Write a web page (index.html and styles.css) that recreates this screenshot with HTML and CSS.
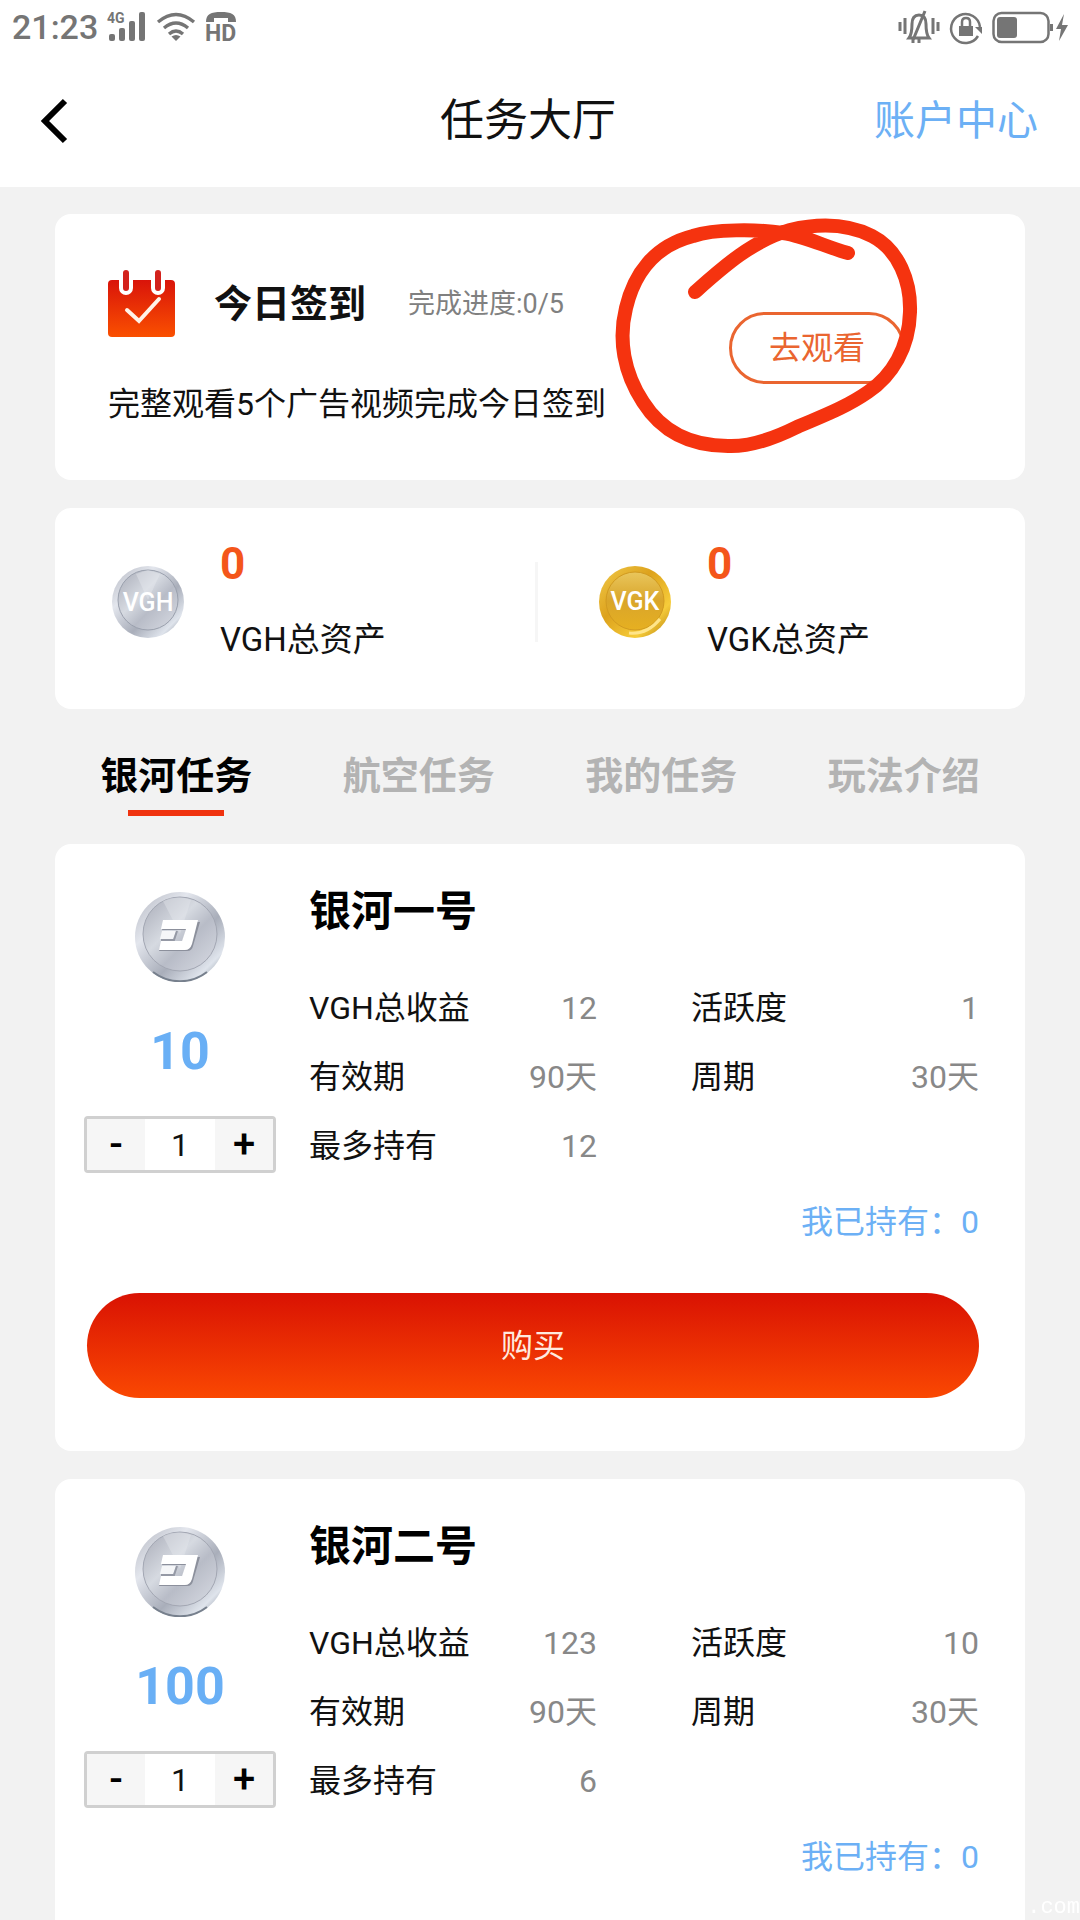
FILE: index.html
```html
<!DOCTYPE html>
<html lang="zh-CN">
<head>
    <meta charset="UTF-8">
    <meta name="viewport" content="width=device-width, initial-scale=1.0">
    <title>任务大厅</title>
    <link rel="stylesheet" href="styles.css">
</head>
<body>
    <!-- shared gradients and the coin used in the task cards -->
    <svg class="defs" aria-hidden="true">
        <defs>
            <linearGradient id="red" x1="0" y1="0" x2="0" y2="1">
                <stop offset="0" stop-color="#d9140a"/>
                <stop offset="1" stop-color="#fa5000"/>
            </linearGradient>
            <linearGradient id="rim" x1="0" y1="0" x2="1" y2="1">
                <stop offset="0" stop-color="#b3b6c0"/>
                <stop offset="0.3" stop-color="#e3e6ed"/>
                <stop offset="0.6" stop-color="#a9aeba"/>
                <stop offset="0.82" stop-color="#dfe4ec"/>
                <stop offset="1" stop-color="#6c7683"/>
            </linearGradient>
            <linearGradient id="face" x1="0" y1="0" x2="1" y2="1">
                <stop offset="0" stop-color="#a7aab6"/>
                <stop offset="0.4" stop-color="#d6dae1"/>
                <stop offset="0.6" stop-color="#b8bcc7"/>
                <stop offset="1" stop-color="#d9dce4"/>
            </linearGradient>
            <linearGradient id="goldRim" x1="0" y1="0" x2="1" y2="1">
                <stop offset="0" stop-color="#f1cb4c"/>
                <stop offset="0.4" stop-color="#dda21c"/>
                <stop offset="0.75" stop-color="#f6cc3a"/>
                <stop offset="1" stop-color="#b27a0c"/>
            </linearGradient>
            <linearGradient id="goldFace" x1="0" y1="0" x2="0" y2="1">
                <stop offset="0" stop-color="#e9c65c"/>
                <stop offset="0.5" stop-color="#d9a52a"/>
                <stop offset="1" stop-color="#e6b021"/>
            </linearGradient>
            <symbol id="coin" viewBox="0 0 90 90">
                <circle cx="45" cy="45" r="45" fill="url(#rim)"/>
                <path d="M18 80a44 44 0 0 0 54 0" fill="none" stroke="#77808d" stroke-width="2"/>
                <circle cx="45" cy="42" r="37" fill="url(#face)" stroke="#a3a7b3" stroke-width="1"/>
                <path d="M45 42 28 9a37 37 0 0 1 28-1z" fill="#e6e8ee" opacity="0.4"/>
                <path d="M29 30h36l-7 24q-1 5-6 5H24l3-9h20l4-12H27z" fill="#8c909c"/>
                <path d="M28 28h35l-6 24q-2 6-7 6H24l2-9h21l4-12H26z" fill="#fff"/>
                <path d="M27 39h14l-3 8H25z" fill="#f5f6f8"/>
                <path d="M26 48h13l3-9" fill="none" stroke="#9599a5" stroke-width="2"/>
            </symbol>
        </defs>
    </svg>

    <div class="page">
        <div class="status-bar">
            <div class="status-group">
                <span class="time">21:23</span>
                <svg width="40" height="32" viewBox="0 0 40 32">
                    <text x="0" y="12" class="signal-text">4G</text>
                    <rect x="2" y="23" width="6" height="7" rx="2"/>
                    <rect x="12" y="17" width="6" height="13" rx="2"/>
                    <rect x="22" y="10" width="6" height="20" rx="2"/>
                    <rect x="32" y="1" width="6" height="29" rx="2"/>
                </svg>
                <svg width="40" height="32" viewBox="0 0 40 32">
                    <g fill="none" stroke="#757575" stroke-width="3.4">
                        <path d="M2 11q18-15 36 0"/>
                        <path d="M8 17q12-10 24 0"/>
                        <path d="M13 23q7-6 14 0"/>
                    </g>
                    <path d="M15.500 25.500q4.500-3 9 0L20 30z"/>
                </svg>
                <svg width="32" height="32" viewBox="0 0 32 32">
                    <path d="M1 11C1 3 6 1 16 1s15 2 15 10h-8V7H9v4z"/>
                    <text x="0" y="30" class="hd-text">HD</text>
                </svg>
            </div>
            <div class="status-group">
                <svg width="42" height="34" viewBox="0 0 42 34">
                    <g fill="none" stroke="#757575" stroke-width="3">
                        <path d="M2 12v9M7 8v16M40 12v9M35 8v16"/>
                        <path d="M11 28q3-4 3-14 0-9 7-9t7 9q0 10 3 14z"/>
                        <path d="M15 30 27 1M15 29v4M21 29v4"/>
                    </g>
                </svg>
                <svg width="34" height="34" viewBox="0 0 34 34">
                    <path d="M29 26A14.500 14.500 0 1 1 31 17" fill="none" stroke="#757575" stroke-width="2.500"/>
                    <path d="M26 17h7v7z"/>
                    <rect x="10" y="16" width="14" height="10"/>
                    <path d="M13 16v-4q0-4 4-4t4 4v4" fill="none" stroke="#757575" stroke-width="2.500"/>
                </svg>
                <svg width="76" height="34" viewBox="0 0 76 34">
                    <rect x="1.500" y="3" width="55" height="29" rx="8" fill="none" stroke="#757575" stroke-width="2.500"/>
                    <rect x="5" y="7" width="20" height="21" rx="3"/>
                    <rect x="58" y="14" width="3" height="7"/>
                    <path d="m72 4-8 15h5l-2 12 9-16h-6z"/>
                </svg>
            </div>
        </div>

        <header class="navbar">
            <button class="back" type="button" aria-label="返回">
                <svg width="28" height="46" viewBox="0 0 28 46">
                    <path d="M25 3 5 23l20 20" fill="none" stroke="#000" stroke-width="6"/>
                </svg>
            </button>
            <h1>任务大厅</h1>
            <a class="account" href="#">账户中心</a>
        </header>

        <main class="content">
            <section class="card sign-card">
                <div class="sign-info">
                    <div class="sign-head">
                        <svg width="68" height="68" viewBox="0 0 68 68">
                            <rect x="0" y="10" width="67" height="57" rx="4" fill="url(#red)"/>
                            <path d="M18 0v18M50 0v18" stroke="#fff" stroke-width="14" stroke-linecap="round"/>
                            <path d="M18 3v15M50 3v15" stroke="#d3221c" stroke-width="6" stroke-linecap="round"/>
                            <path d="m19 40 12 11 20-22" fill="none" stroke="#fff3e8" stroke-width="4" stroke-linecap="round"/>
                        </svg>
                        <h2>今日签到</h2>
                        <span class="progress">完成进度:0/5</span>
                    </div>
                    <p>完整观看5个广告视频完成今日签到</p>
                </div>
                <button class="watch" type="button">去观看</button>
                <!-- hand-drawn ring round the button -->
                <svg class="ring" width="310" height="250" viewBox="610 210 310 250">
                    <path d="M695 292C722 268 753 240 790 230C820 223 848 224 872 236C899 250 911 282 910 312C909 348 892 376 868 392C845 408 820 417 797 427C777 437 752 447 728 446C690 446 662 432 643 402C624 373 618 340 626 308C634 274 654 246 693 236C714 229 757 229 783 233C805 236 826 247 848 253"/>
                </svg>
            </section>

            <section class="card asset-card">
                <div class="asset">
                    <svg width="72" height="72" viewBox="0 0 72 72">
                        <circle cx="36" cy="36" r="36" fill="url(#rim)"/>
                        <circle cx="36" cy="34" r="30" fill="url(#face)" stroke="#9aa0ad"/>
                        <path d="m36 34-12-26 12-4 12 4z" fill="#e8eaf0" opacity="0.4"/>
                        <text x="36" y="45" class="coin-text">VGH</text>
                    </svg>
                    <div class="asset-text">
                        <strong>0</strong>
                        <span>VGH总资产</span>
                    </div>
                </div>
                <div class="asset asset-right">
                    <svg width="72" height="72" viewBox="0 0 72 72">
                        <circle cx="36" cy="36" r="36" fill="url(#goldRim)"/>
                        <circle cx="36" cy="35" r="29" fill="url(#goldFace)" stroke="#d19a20"/>
                        <path d="M30 67q18 2 31-14" fill="none" stroke="#ffe58a" stroke-width="3"/>
                        <text x="36" y="44" class="coin-text">VGK</text>
                    </svg>
                    <div class="asset-text">
                        <strong>0</strong>
                        <span>VGK总资产</span>
                    </div>
                </div>
            </section>

            <nav class="tabs">
                <a class="active" href="#">银河任务</a>
                <a href="#">航空任务</a>
                <a href="#">我的任务</a>
                <a href="#">玩法介绍</a>
            </nav>

            <section class="card task">
                <div class="task-body">
                    <div class="task-left">
                        <svg width="90" height="90"><use href="#coin"/></svg>
                        <strong class="price">10</strong>
                        <div class="stepper">
                            <button type="button">-</button>
                            <input type="text" value="1" aria-label="数量">
                            <button type="button">+</button>
                        </div>
                    </div>
                    <div class="task-right">
                        <h2>银河一号</h2>
                        <dl>
                            <div><dt>VGH总收益</dt><dd>12</dd></div>
                            <div><dt>活跃度</dt><dd>1</dd></div>
                            <div><dt>有效期</dt><dd>90天</dd></div>
                            <div><dt>周期</dt><dd>30天</dd></div>
                            <div><dt>最多持有</dt><dd>12</dd></div>
                        </dl>
                        <p class="owned">我已持有：0</p>
                    </div>
                </div>
                <button class="buy" type="button">购买</button>
            </section>

            <section class="card task">
                <div class="task-body">
                    <div class="task-left">
                        <svg width="90" height="90"><use href="#coin"/></svg>
                        <strong class="price">100</strong>
                        <div class="stepper">
                            <button type="button">-</button>
                            <input type="text" value="1" aria-label="数量">
                            <button type="button">+</button>
                        </div>
                    </div>
                    <div class="task-right">
                        <h2>银河二号</h2>
                        <dl>
                            <div><dt>VGH总收益</dt><dd>123</dd></div>
                            <div><dt>活跃度</dt><dd>10</dd></div>
                            <div><dt>有效期</dt><dd>90天</dd></div>
                            <div><dt>周期</dt><dd>30天</dd></div>
                            <div><dt>最多持有</dt><dd>6</dd></div>
                        </dl>
                        <p class="owned">我已持有：0</p>
                    </div>
                </div>
            </section>
        </main>
    </div>
    <span class="watermark">.com</span>
</body>
</html>
```

FILE: styles.css
```css
* {
    box-sizing: border-box;
    margin: 0;
    padding: 0;
}
body {
    font-family: Roboto, "Noto Sans CJK SC", sans-serif;
    font-size: 32px;
    line-height: 40px;
    color: #111;
    background-color: #f2f2f2;
}
button,
input {
    font: inherit;
    color: inherit;
    border: none;
    background: none;
}
a {
    text-decoration: none;
}
svg {
    display: block;
    flex-shrink: 0;
    overflow: visible;
}
.defs {
    position: absolute;
    width: 0;
    height: 0;
}
.page {
    display: flex;
    flex-direction: column;
    height: 100vh;
}

/* status bar */
.status-bar {
    display: flex;
    justify-content: space-between;
    align-items: center;
    height: 54px;
    padding: 0 12px;
    background-color: #fff;
    color: #757575;
    fill: #757575;
}
.status-group {
    display: flex;
    align-items: center;
    gap: 9px;
}
.time {
    font-size: 34px;
    font-weight: 500;
}
.signal-text {
    font-size: 14px;
    font-weight: bold;
}
.hd-text {
    font-size: 23px;
    font-weight: bold;
}

/* title bar */
.navbar {
    display: grid;
    grid-template-columns: 1fr auto 1fr;
    align-items: center;
    height: 133px;
    padding: 0 42px 0 40px;
    background-color: #fff;
}
.back {
    width: 28px;
}
.navbar h1 {
    padding-right: 22px;
    font-size: 44px;
    font-weight: normal;
}
.account {
    justify-self: end;
    font-size: 41px;
    color: #6cb0f5;
}

.content {
    flex: 1;
    overflow-y: auto;
    scrollbar-width: none;
    padding: 27px 55px;
}
.card {
    background-color: #fff;
    border-radius: 16px;
    margin-bottom: 28px;
}

/* sign in */
.sign-card {
    position: relative;
    display: flex;
    justify-content: space-between;
    align-items: flex-start;
    padding: 56px 120px 56px 53px;
}
.sign-head {
    display: flex;
    align-items: center;
    margin-bottom: 46px;
}
.sign-head h2 {
    font-size: 38px;
    margin: 0 42px 0 38px;
}
.progress {
    font-size: 27px;
    color: #808080;
}
.watch {
    width: 176px;
    height: 72px;
    margin-top: 42px;
    border: 3px solid #ea6530;
    border-radius: 36px;
    color: #ea6530;
}
.ring {
    position: absolute;
    top: -4px;
    right: 105px;
    pointer-events: none;
    fill: none;
    stroke: #f5330f;
    stroke-width: 14px;
    stroke-linecap: round;
}

/* assets */
.asset-card {
    display: flex;
    padding: 36px 0 49px;
}
.asset {
    flex: 1;
    display: flex;
    align-items: center;
    gap: 36px;
    padding-left: 57px;
}
.asset-right {
    position: relative;
    padding-left: 61px;
}
.asset-right::before {
    content: "";
    position: absolute;
    left: -3px;
    top: 18px;
    width: 3px;
    height: 80px;
    background-color: #f6f6f6;
}
.asset-text {
    display: flex;
    flex-direction: column;
    gap: 36px;
    font-size: 33px;
}
.asset-text strong {
    font-size: 44px;
    color: #f4561a;
}
.coin-text {
    fill: #fff;
    font-size: 25px;
    font-weight: 500;
    text-anchor: middle;
}

/* tabs */
.tabs {
    display: flex;
    margin-bottom: 28px;
    padding-top: 19px;
}
.tabs a {
    flex: 1;
    display: flex;
    flex-direction: column;
    align-items: center;
    gap: 14px;
    font-size: 38px;
    font-weight: bold;
    color: #b3b3b3;
}
.tabs a::after {
    content: "";
    width: 96px;
    height: 6px;
}
.tabs .active {
    color: #000;
}
.tabs .active::after {
    background-color: #f0330f;
}

/* task cards */
.task {
    padding: 48px 46px 53px 32px;
}
.task-body {
    display: flex;
    gap: 33px;
    margin-left: -3px;
}
.task-left {
    width: 192px;
    display: flex;
    flex-direction: column;
    align-items: center;
}
.price {
    margin: 40px 0 34px;
    font-size: 52px;
    line-height: 60px;
    color: #69aff5;
}
.stepper {
    display: flex;
    width: 100%;
    height: 57px;
    border: 3px solid #d0d0d0;
    border-radius: 4px;
}
.stepper button {
    width: 58px;
    background-color: #f6f6f6;
    font-size: 40px;
    font-weight: 500;
    color: #000;
}
.stepper input {
    flex: 1;
    min-width: 0;
    text-align: center;
}
.task-right {
    flex: 1;
}
.task-right h2 {
    font-size: 42px;
    margin-bottom: 42px;
    color: #000;
}
.task-right dl {
    display: grid;
    grid-template-columns: 1fr 1fr;
    column-gap: 94px;
}
.task-right dl div {
    display: flex;
    justify-content: space-between;
    line-height: 69px;
}
.task-right dd {
    color: #888;
}
.owned {
    margin: 21px 0 51px;
    text-align: right;
    color: #6cb0f5;
}
.buy {
    width: 100%;
    height: 105px;
    border-radius: 53px;
    background: linear-gradient(#d91203, #fa4802);
    color: #ffeadf;
}

.watermark {
    position: fixed;
    right: 0;
    bottom: 0;
    font: 22px/24px "Liberation Mono", monospace;
    color: #fff;
}
```
